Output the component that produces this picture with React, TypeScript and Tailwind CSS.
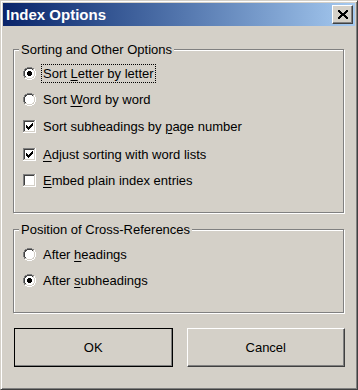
import React from 'react';

// Classic Win2000 style "Index Options" dialog

const COLORS: Record<string, string> = {
  g: '#808080',
  d: '#404040',
  w: '#ffffff',
  l: '#d4d0c8',
  b: '#000000',
};

const Pix = ({ rows }: { rows: string[] }) => {
  const w = rows[0].length;
  const h = rows.length;
  return (
    <svg width={w} height={h} viewBox={`0 0 ${w} ${h}`} shapeRendering="crispEdges" className="block shrink-0">
      {rows.flatMap((r, y) =>
        r.split('').map((c, x) =>
          COLORS[c] ? <rect key={`${x}-${y}`} x={x} y={y} width={1} height={1} fill={COLORS[c]} /> : null
        )
      )}
    </svg>
  );
};

const radioRows = (on: boolean) => [
  '....ggggg....',
  '..ggdddddgg..',
  '.gddwwwwwdlw.',
  '.gdwwwwwwwlw.',
  on ? 'gdwwwbbbwwwlw' : 'gdwwwwwwwwwlw',
  on ? 'gdwwbbbbbwwlw' : 'gdwwwwwwwwwlw',
  on ? 'gdwwbbbbbwwlw' : 'gdwwwwwwwwwlw',
  on ? 'gdwwbbbbbwwlw' : 'gdwwwwwwwwwlw',
  on ? 'gdwwwbbbwwwlw' : 'gdwwwwwwwwwlw',
  '.gdwwwwwwwlw.',
  '.gllwwwwwllw.',
  '..wwlllllww..',
  '....wwwww....',
];

const CHECK_OFF = [
  'ggggggggggggw',
  'gddddddddddlw',
  'gdwwwwwwwwwlw',
  'gdwwwwwwwwwlw',
  'gdwwwwwwwwwlw',
  'gdwwwwwwwwwlw',
  'gdwwwwwwwwwlw',
  'gdwwwwwwwwwlw',
  'gdwwwwwwwwwlw',
  'gdwwwwwwwwwlw',
  'gdwwwwwwwwwlw',
  'glllllllllllw',
  'wwwwwwwwwwwww',
];

const CHECK_ON = [
  'ggggggggggggw',
  'gddddddddddlw',
  'gdwwwwwwwwwlw',
  'gdwwwwwwwbwlw',
  'gdwwwwwwbbwlw',
  'gdwbwwwbbbwlw',
  'gdwbbwbbbwwlw',
  'gdwbbbbbwwwlw',
  'gdwwbbbwwwwlw',
  'gdwwwbwwwwwlw',
  'gdwwwwwwwwwlw',
  'glllllllllllw',
  'wwwwwwwwwwwww',
];

const CLOSE_X = [
  'bb......bb',
  'bbb....bbb',
  '.bbb..bbb.',
  '..bbbbbb..',
  '...bbbb...',
  '..bbbbbb..',
  '.bbb..bbb.',
  'bbb....bbb',
  'bb......bb',
];

const Label = ({ text, keyIdx }: { text: string; keyIdx: number }) => (
  <>
    {text.slice(0, keyIdx)}
    <span className="underline underline-offset-2">{text[keyIdx]}</span>
    {text.slice(keyIdx + 1)}
  </>
);

const Radio = ({ on, text, keyIdx, focus, cls }: { on: boolean; text: string; keyIdx: number; focus?: boolean; cls: string }) => (
  <div className={`flex items-center h-[20px] ${cls}`}>
    <Pix rows={radioRows(on)} />
    <span className={`ml-[5px] px-[1px] leading-[17px] border ${focus ? 'border-dotted border-black' : 'border-transparent'}`}>
      <Label text={text} keyIdx={keyIdx} />
    </span>
  </div>
);

const Check = ({ on, text, keyIdx, cls }: { on: boolean; text: string; keyIdx: number; cls: string }) => (
  <div className={`flex items-center h-[20px] ${cls}`}>
    <Pix rows={on ? CHECK_ON : CHECK_OFF} />
    <span className="ml-[5px] px-[1px] leading-[17px] border border-transparent">
      <Label text={text} keyIdx={keyIdx} />
    </span>
  </div>
);

const GroupBox = ({ title, cls, children }: { title: string; cls: string; children: React.ReactNode }) => (
  <div className={`relative mr-[1px] border border-[#808080] shadow-[1px_1px_0_#fff,inset_1px_1px_0_#fff] pl-[9px] flex flex-col ${cls}`}>
    <span className="absolute left-[5px] top-[-8px] px-[2px] bg-[#d4d0c8] leading-[15px]">{title}</span>
    {children}
  </div>
);

export default function App() {
  return (
    <div
      className="w-[358px] h-[390px] bg-[#d4d0c8] border border-t-[#d4d0c8] border-l-[#d4d0c8] border-b-[#404040] border-r-[#404040] shadow-[inset_1px_1px_0_#fff,inset_-1px_-1px_0_#808080] p-[2px] flex flex-col text-black text-[13px]"
      style={{ fontFamily: '"Liberation Sans", Arial, sans-serif' }}
    >
      {/* title bar */}
      <div className="h-[23px] flex items-center bg-linear-to-r from-[#0a246a] to-[#a6caf0] pl-[3px] pr-[2px]">
        <span className="text-white font-bold text-[15px] leading-none">Index Options</span>
        <div className="ml-auto w-[21px] h-[19px] flex items-center justify-center bg-[#d4d0c8] border border-t-white border-l-white border-b-[#404040] border-r-[#404040] shadow-[inset_-1px_-1px_0_#808080]">
          <Pix rows={CLOSE_X} />
        </div>
      </div>

      <div className="px-[10px] flex flex-col">
        <GroupBox title="Sorting and Other Options" cls="mt-[23px] h-[164px] pt-[13px]">
          <Radio on text="Sort Letter by letter" keyIdx={5} focus cls="" />
          <Radio on={false} text="Sort Word by word" keyIdx={5} cls="mt-[6px]" />
          <Check on text="Sort subheadings by page number" keyIdx={20} cls="mt-[7px]" />
          <Check on text="Adjust sorting with word lists" keyIdx={0} cls="mt-[8px]" />
          <Check on={false} text="Embed plain index entries" keyIdx={0} cls="mt-[6px]" />
        </GroupBox>

        <GroupBox title="Position of Cross-References" cls="mt-[16px] h-[84px] pt-[14px]">
          <Radio on={false} text="After headings" keyIdx={6} cls="" />
          <Radio on text="After subheadings" keyIdx={6} cls="mt-[6px]" />
        </GroupBox>

        <div className="mt-[15px] pl-[1px] flex gap-[14px]">
          <button className="w-[159px] h-[39px] border border-black shadow-[inset_-1px_-1px_0_#808080] bg-[#d4d0c8] flex items-center justify-center">
            OK
          </button>
          <button className="w-[159px] h-[39px] border border-t-white border-l-white border-b-[#404040] border-r-[#404040] shadow-[inset_-1px_-1px_0_#808080] bg-[#d4d0c8] flex items-center justify-center">
            Cancel
          </button>
        </div>
      </div>
    </div>
  );
}
